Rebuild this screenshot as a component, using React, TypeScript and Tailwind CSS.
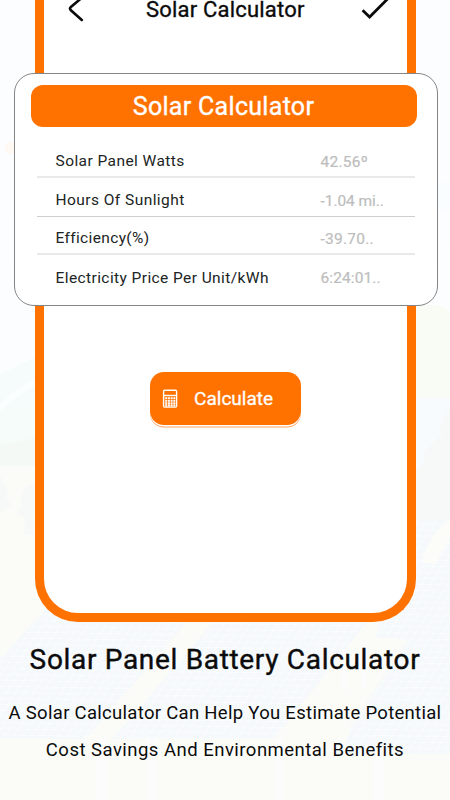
const rows = [
  { label: 'Solar Panel Watts', value: '42.56º', labelGap: 'tracking-[0.43px]', valueGap: 'tracking-[0.25px]', line: 'border-b-2 border-[#e9e9e9]' },
  { label: 'Hours Of Sunlight', value: '-1.04 mi..', labelGap: 'tracking-[0.45px]', valueGap: 'tracking-[-0.05px]', line: 'border-b border-[#cfcfcf]' },
  { label: 'Efficiency(%)', value: '-39.70..', labelGap: 'tracking-[0.35px]', valueGap: 'tracking-[0.25px]', line: 'border-b-2 border-[#e9e9e9]' },
  { label: 'Electricity Price Per Unit/kWh', value: '6:24:01..', labelGap: 'tracking-[0.41px]', valueGap: 'tracking-[0.1px]', line: '' },
];

function Scenery() {
  return (
    <svg className="absolute inset-0" width="450" height="800" viewBox="0 0 450 800" fill="none">
      <defs>
        <linearGradient id="sky" x1="0" y1="0" x2="0" y2="1">
          <stop offset="0" stopColor="#fcfdff" />
          <stop offset="1" stopColor="#fdfefe" />
        </linearGradient>
        <linearGradient id="hill" x1="0" y1="0" x2="0" y2="1">
          <stop offset="0" stopColor="#f6fcfb" />
          <stop offset="0.7" stopColor="#f5fcfa" />
          <stop offset="1" stopColor="#f3f9f5" />
        </linearGradient>
        <pattern id="cells" width="9" height="6" patternUnits="userSpaceOnUse" patternTransform="skewX(-33) rotate(1)">
          <rect width="9" height="6" fill="#f6f9fb" />
          <path d="M0 0H9M0 0V6" stroke="#fbfdfe" strokeWidth="1.3" />
          <circle cx="0" cy="0" r="1.3" fill="#ffffff" />
        </pattern>
      </defs>
      <rect width="450" height="800" fill="url(#sky)" />
      <circle cx="11" cy="148" r="6.5" fill="#fff9f4" />
      <path d="M416 182Q436 179 450 182V212Q430 209 416 214Z" fill="#fafdff" />
      <path d="M0 374L35 357V466H0Z" fill="url(#hill)" />
      <path d="M0 404Q18 386 35 378V386Q16 395 0 412Z" fill="#fafefe" />
      <path d="M0 446L35 438V466H0Z" fill="#f4f9f5" />
      <rect y="466" width="450" height="334" fill="#fbfcf8" />
      <path d="M0 476L8 491L6 497L11 505L3 510L0 514ZM27 486L20 499L22 505L17 514L25 518L24 535H33L35 486Z" fill="#f7f9f8" />
      <path d="M416 306Q438 302 450 311V400H416Z" fill="#f9fbf5" />
      <path d="M416 398H450V520H416Z" fill="#f7fbfd" />
      <path d="M450 408L439 429L443 433L423 454L424 462L416 470V520H450Z" fill="#f6f9f8" />
      <path d="M44 610H198L86 739H0V659Z" fill="url(#cells)" />
      <path d="M214 621H368L274 739H112Z" fill="url(#cells)" />
      <path d="M408 520H450V754H343Z" fill="url(#cells)" />
      <path d="M433 536L450 518V536L436 564L421 562Z" fill="#fcfdf9" />
      <path d="M374 621H370L276 739H342L408 640L367 637Z" fill="#fbfcf8" />
      <path d="M193 621H210L112 739H91Z" fill="#fbfcf8" />
      <path d="M97 739H107V800H97ZM147 739H157V800H147ZM274 739H283V800H274ZM374 748H383V800H374ZM342 650H347V690H342ZM361 647H366V687H361Z" fill="#fcfcfc" />
    </svg>
  );
}

function CalculatorIcon() {
  return (
    <svg width="16" height="20" viewBox="0 0 16 20" fill="none">
      <rect x="1.6" y="1.3" width="13" height="16.8" rx="1" stroke="#fff" strokeWidth="1.4" />
      <path d="M2 6.5H14" stroke="#fff" strokeWidth="1.4" />
      <path d="M3.2 9.1H13.7M3.2 11.7H13.7M3.2 14.3H13.7M3.2 16.5H13.7" stroke="#fff" strokeWidth="1.9" strokeDasharray="2 0.7" />
    </svg>
  );
}

export default function App() {
  return (
    <div className="relative h-[800px] w-[450px] overflow-hidden font-[Roboto,sans-serif] text-[#0b0b0b]">
      <Scenery />
      <main className="relative flex flex-col">
        <section className="ml-[34.5px] flex h-[621.5px] w-[381.5px] flex-col rounded-b-[43px] border-x-[9px] border-b-[9px] border-[#ff7200] bg-white">
          <header className="flex h-[72.5px] shrink-0 items-start justify-between pr-[18px] pl-[23px]">
            <svg width="18" height="24" viewBox="0 0 18 24" fill="none">
              <path d="M14.5 -2L3.6 7.3Q2.4 8.6 3.6 10L14.8 20" stroke="#0b0b0b" strokeWidth="2.6" strokeLinecap="round" />
            </svg>
            <h1 className="ml-[5px] w-[160px] text-center text-[22px] leading-[20px] font-normal tracking-[0.2px] whitespace-nowrap [-webkit-text-stroke:0.35px]">Solar Calculator</h1>
            <svg width="28" height="24" viewBox="0 0 28 24" fill="none">
              <path d="M1.6 10.3L8.6 17L26.5 -1" stroke="#0b0b0b" strokeWidth="2.8" />
            </svg>
          </header>
          <div className="-ml-[30px] flex h-[233px] w-[424px] shrink-0 flex-col rounded-[20px] border border-[#858585] bg-white px-[16px] pt-[11.5px]">
            <h2 className="flex h-[42px] w-[386px] shrink-0 items-center justify-center rounded-[12px] bg-[#ff7200] pt-px text-[25px] font-normal tracking-[0.3px] whitespace-nowrap text-white [-webkit-text-stroke:0.35px]">Solar Calculator</h2>
            <ul className="mt-[12.5px] ml-[6px] flex w-[378px] flex-col">
              {rows.map((row) => (
                <li key={row.label} className={`flex h-[38.5px] items-center pl-[19px] text-[15.5px] ${row.line}`}>
                  <span className={`w-[265px] shrink-0 pt-[8px] whitespace-nowrap text-[#202423] ${row.labelGap}`}>{row.label}</span>
                  <span className={`pt-[9px] whitespace-nowrap text-[#bdbdbd] [-webkit-text-stroke:0.2px] ${row.valueGap}`}>{row.value}</span>
                </li>
              ))}
            </ul>
          </div>
          <button className="mt-[66.5px] ml-[106px] flex h-[53px] w-[151.5px] shrink-0 items-center rounded-[14px] bg-[#ff7200] pl-[12px] text-[19px] font-normal text-white shadow-[0_1.5px_0_#fff,0_2.5px_0_#ffa566]">
            <CalculatorIcon />
            <span className="ml-[16.5px] pt-[2px] tracking-[0.02px] [-webkit-text-stroke:0.3px]">Calculate</span>
          </button>
        </section>
        <h2 className="mt-[21.5px] text-center text-[28px] leading-[34px] font-normal tracking-[0.68px] whitespace-nowrap [-webkit-text-stroke:0.4px]">Solar Panel Battery Calculator</h2>
        <p className="mt-[17.5px] text-center text-[18.5px] leading-[37px] whitespace-nowrap">
          <span className="tracking-[0.3px]">A Solar Calculator Can Help You Estimate Potential</span>
          <br />
          <span className="tracking-[0.48px]">Cost Savings And Environmental Benefits</span>
        </p>
      </main>
    </div>
  );
}
